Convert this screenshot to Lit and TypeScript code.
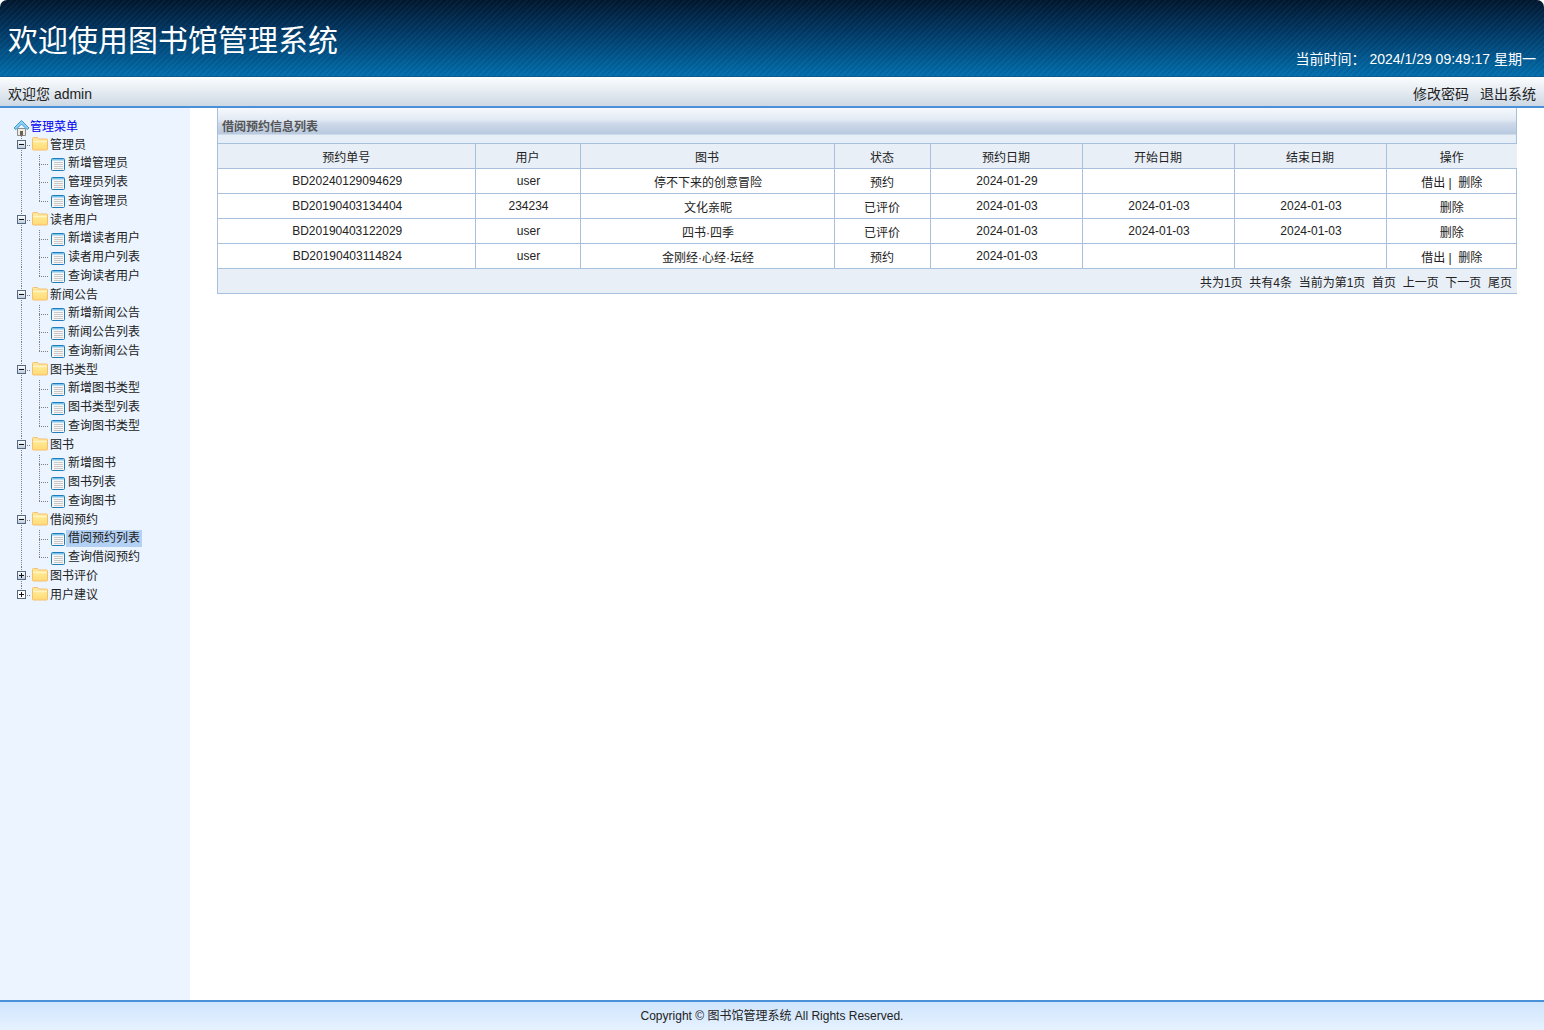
import { LitElement, html, css, svg } from "lit";
import { customElement } from "lit/decorators.js";

type Group = { name: string; open: boolean; items: string[] };

const GROUPS: Group[] = [
  { name: "管理员", open: true, items: ["新增管理员", "管理员列表", "查询管理员"] },
  { name: "读者用户", open: true, items: ["新增读者用户", "读者用户列表", "查询读者用户"] },
  { name: "新闻公告", open: true, items: ["新增新闻公告", "新闻公告列表", "查询新闻公告"] },
  { name: "图书类型", open: true, items: ["新增图书类型", "图书类型列表", "查询图书类型"] },
  { name: "图书", open: true, items: ["新增图书", "图书列表", "查询图书"] },
  { name: "借阅预约", open: true, items: ["借阅预约列表", "查询借阅预约"] },
  { name: "图书评价", open: false, items: [] },
  { name: "用户建议", open: false, items: [] },
];

const COLS = [
  ["预约单号", 257], ["用户", 105], ["图书", 254], ["状态", 96],
  ["预约日期", 152], ["开始日期", 152], ["结束日期", 152], ["操作", 131],
] as const;

const ROWS = [
  ["BD20240129094629", "user", "停不下来的创意冒险", "预约", "2024-01-29", "", "", "both"],
  ["BD20190403134404", "234234", "文化亲昵", "已评价", "2024-01-03", "2024-01-03", "2024-01-03", "del"],
  ["BD20190403122029", "user", "四书·四季", "已评价", "2024-01-03", "2024-01-03", "2024-01-03", "del"],
  ["BD20190403114824", "user", "金刚经·心经·坛经", "预约", "2024-01-03", "", "", "both"],
];

const folderIcon = svg`<svg width="18" height="18" viewBox="0 0 18 18">
  <defs><linearGradient id="fg" x1="0" y1="0" x2="0" y2="1"><stop offset="0" stop-color="#ffe9a6"/><stop offset=".5" stop-color="#ffe68c"/><stop offset="1" stop-color="#ffd977"/></linearGradient></defs>
  <path d="M2.5 2.5 q0-1 1-1 h4 l1 1.5 h8 q1 0 1 1 v9 q0 1-1 1 h-13 q-1 0-1-1z" fill="url(#fg)" stroke="#f7bf6a" stroke-width="1"/>
  <path d="M3 5.5 h14" stroke="#fff4c4" stroke-width="1.4"/></svg>`;

const pageIcon = svg`<svg width="18" height="18" viewBox="0 0 18 18">
  <rect x="3.5" y="3.5" width="13" height="12" rx="1" fill="#f6f6f6" stroke="#1f7dbb"/>
  <rect x="4" y="4" width="12" height="1.5" fill="#7cc3ec"/>
  <path d="M6 7.5h9M6 9.5h9M6 11.5h9M6 13.5h9" stroke="#c8c8c8" stroke-width="1"/></svg>`;

const homeIcon = svg`<svg width="18" height="18" viewBox="0 0 18 18">
  <path d="M5.5 10.5 h8 v7 h-8z" fill="#efece6" stroke="#8c8c8c"/>
  <rect x="8" y="13" width="3" height="4.5" fill="#6f5f50"/>
  <path d="M2 10 L9.5 2.5 L17 10 L15 11.5 L9.5 6 L4 11.5z" fill="#8fd0f5" stroke="#3f97d0" stroke-linejoin="round"/></svg>`;

const boxIcon = (open: boolean, plain: boolean) => svg`<svg width="18" height="18" viewBox="0 0 18 18">
  <defs><linearGradient id="bx" x1="0" y1="0" x2="0" y2="1"><stop offset="0" stop-color="#fff"/><stop offset="1" stop-color="#bccadc"/></linearGradient></defs>
  <rect x="5.5" y="4.5" width="8" height="8" fill="${plain ? "#fff" : "url(#bx)"}" stroke="#566880"/>
  <path d="M7 8.5h5" stroke="#111"/>
  ${open ? "" : svg`<path d="M9.5 6v5" stroke="#111"/>`}</svg>`;

@customElement("app-root")
export class AppRoot extends LitElement {
  static styles = css`
    :host {
      display: flex;
      flex-direction: column;
      height: 1030px;
      font-family: "Liberation Sans", "Noto Sans CJK SC", sans-serif;
      font-size: 12px;
      color: #111;
      background: #fff;
      overflow: hidden;
    }
    .head {
      height: 76px;
      flex: none;
      box-sizing: border-box;
      border-radius: 7px 7px 0 0;
      background:
        repeating-linear-gradient(-45deg, rgba(255,255,255,.03) 0 2px, rgba(0,0,0,.02) 2px 4px),
        linear-gradient(to bottom, #00162d 0%, #003a68 45%, #006dab 100%);
      display: flex;
      align-items: flex-end;
      justify-content: space-between;
      padding: 0 8px;
      color: #fff;
    }
    .title { font-size: 30px; line-height: 44px; margin-bottom: 13px; }
    .clock { font-size: 14px; line-height: 18px; margin-bottom: 8px; }
    .clock span { margin-right: 4px; }
    .sub {
      height: 32px;
      flex: none;
      box-sizing: border-box;
      border-top: 1px solid #0b5a92;
      border-bottom: 2px solid #4a90d9;
      background: linear-gradient(to bottom, #fbfdff, #ced9e4);
      display: flex;
      justify-content: space-between;
      align-items: center;
      padding: 3px 8px 0;
      font-size: 14px;
      color: #222;
    }
    .links { display: flex; gap: 11px; }
    .body { flex: 1; display: flex; min-height: 0; }
    .side {
      width: 190px;
      flex: none;
      box-sizing: border-box;
      background: #ebf4ff;
      padding: 9.5px 0 0 12px;
    }
    .row { height: 18.75px; display: flex; align-items: center; line-height: 18px; white-space: nowrap; color: #222; }
    .root { height: 18.25px; color: #0000f0; }
    .cell { width: 18px; height: 100%; flex: none; display: flex; align-items: center; justify-content: center; }
    .cell svg { display: block; }
    .v { background: repeating-linear-gradient(to bottom, #808080 0 1px, transparent 1px 2px) 9px 0 / 1px 100% no-repeat; }
    .j {
      background:
        repeating-linear-gradient(to bottom, #808080 0 1px, transparent 1px 2px) 9px 0 / 1px 100% no-repeat,
        repeating-linear-gradient(to right, #808080 0 1px, transparent 1px 2px) 9px 9px / 9px 1px no-repeat;
    }
    .j.last {
      background:
        repeating-linear-gradient(to bottom, #808080 0 1px, transparent 1px 2px) 9px 0 / 1px 50% no-repeat,
        repeating-linear-gradient(to right, #808080 0 1px, transparent 1px 2px) 9px 9px / 9px 1px no-repeat;
    }
    .label { padding: 0 2px; line-height: 17px; }
    .label.sel { background: #b3d1f5; }
    .main { flex: 1; padding: 0 27px; min-width: 0; }
    .panel { width: 1300px; box-sizing: border-box; border-left: 1px solid #a8c0de; border-right: 1px solid #a8c0de; }
    .ptitle {
      height: 35px;
      box-sizing: border-box;
      padding: 12px 0 0 4px;
      line-height: 15px;
      font-weight: bold;
      color: #555;
      background: linear-gradient(to bottom, #f6f9fd 0, #e2e9f3 12px, #cfdaea 15px, #b8c9df 26px, #e6eef8 27px, #e6eef8 100%);
    }
    table { border-collapse: collapse; table-layout: fixed; width: 1298px; }
    th, td { border: 1px solid #a8c0de; height: 24px; padding: 0; text-align: center; font-weight: normal; color: #222; }
    td { padding-left: 2px; }
    td:nth-child(4), td:nth-child(8) { padding-left: 0; }
    tr > :first-child { border-left: 0; }
    tr > :last-child { border-right: 0; }
    th { background: #e9eff7; }
    .pager td { background: #e9eff7; text-align: right; padding: 0 5px 0 0; }
    .pager span { margin-left: 6.67px; }
    .foot {
      height: 30px;
      flex: none;
      box-sizing: border-box;
      border-top: 2px solid #4a90d9;
      background: linear-gradient(to bottom, #cfe5fd, #e6f2ff);
      text-align: center;
      line-height: 28px;
      color: #222;
    }
  `;

  private renderTree() {
    const n = GROUPS.length;
    return html`
      <div class="row root"><span class="cell">${homeIcon}</span><span>管理菜单</span></div>
      ${GROUPS.map((g, i) => {
        const last = i === n - 1;
        return html`
          <div class="row">
            <span class="cell j ${last ? "last" : ""}">${boxIcon(g.open, last)}</span>
            <span class="cell">${folderIcon}</span>
            <span class="label">${g.name}</span>
          </div>
          ${g.items.map((it, k) => html`
            <div class="row">
              <span class="cell ${last ? "" : "v"}"></span>
              <span class="cell j ${k === g.items.length - 1 ? "last" : ""}"></span>
              <span class="cell">${pageIcon}</span>
              <span class="label ${it === "借阅预约列表" ? "sel" : ""}">${it}</span>
            </div>`)}
        `;
      })}
    `;
  }

  render() {
    return html`
      <div class="head">
        <div class="title">欢迎使用图书馆管理系统</div>
        <div class="clock"><span>当前时间：</span>2024/1/29 09:49:17 星期一</div>
      </div>
      <div class="sub">
        <div>欢迎您 admin</div>
        <div class="links"><span>修改密码</span><span>退出系统</span></div>
      </div>
      <div class="body">
        <div class="side">${this.renderTree()}</div>
        <div class="main">
          <div class="panel">
            <div class="ptitle">借阅预约信息列表</div>
            <table>
              <colgroup>${COLS.map(([, w]) => html`<col style="width:${w}px" />`)}</colgroup>
              <tr>${COLS.map(([t]) => html`<th>${t}</th>`)}</tr>
              ${ROWS.map((r) => html`<tr>
                ${r.slice(0, 7).map((c) => html`<td>${c}</td>`)}
                <td>${r[7] === "both" ? "借出 |\u00a0\u00a0删除" : "删除"}</td>
              </tr>`)}
              <tr class="pager"><td colspan="8">
                <span>共为1页</span><span>共有4条</span><span>当前为第1页</span><span>首页</span><span>上一页</span><span>下一页</span><span>尾页</span>
              </td></tr>
            </table>
          </div>
        </div>
      </div>
      <div class="foot">Copyright © 图书馆管理系统 All Rights Reserved.</div>
    `;
  }
}
